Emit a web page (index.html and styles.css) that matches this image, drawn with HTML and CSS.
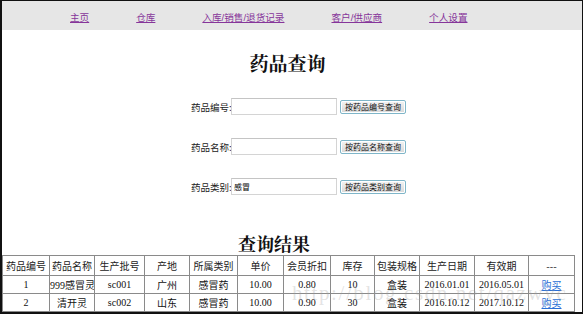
FILE: index.html
```html
<!DOCTYPE html>
<html lang="zh-CN">
<head>
    <meta charset="UTF-8">
    <title>药品查询</title>
    <link rel="stylesheet" href="styles.css">
</head>
<body>
    <div class="frame">
        <div class="nav">
            <a href="#">主页</a>
            <a href="#">仓库</a>
            <a href="#">入库/销售/退货记录</a>
            <a href="#">客户/供应商</a>
            <a href="#">个人设置</a>
        </div>

        <h1 class="title">药品查询</h1>

        <div class="search">
            <div class="row">
                <span class="label">药品编号:</span>
                <input type="text" class="field">
                <button class="btn">按药品编号查询</button>
            </div>
            <div class="row">
                <span class="label">药品名称:</span>
                <input type="text" class="field">
                <button class="btn">按药品名称查询</button>
            </div>
            <div class="row">
                <span class="label">药品类别:</span>
                <input type="text" class="field" value="感冒">
                <button class="btn">按药品类别查询</button>
            </div>
        </div>

        <h2 class="result-title">查询结果</h2>

        <table class="result">
            <colgroup>
                <col style="width: 47px">
                <col style="width: 45px">
                <col style="width: 50px">
                <col style="width: 45px">
                <col style="width: 48px">
                <col style="width: 46px">
                <col style="width: 47px">
                <col style="width: 44px">
                <col style="width: 45px">
                <col style="width: 55px">
                <col style="width: 54px">
                <col style="width: 46px">
            </colgroup>
            <thead>
                <tr>
                    <th>药品编号</th>
                    <th>药品名称</th>
                    <th>生产批号</th>
                    <th>产地</th>
                    <th>所属类别</th>
                    <th>单价</th>
                    <th>会员折扣</th>
                    <th>库存</th>
                    <th>包装规格</th>
                    <th>生产日期</th>
                    <th>有效期</th>
                    <th>---</th>
                </tr>
            </thead>
            <tbody>
                <tr>
                    <td>1</td>
                    <td>999感冒灵</td>
                    <td>sc001</td>
                    <td>广州</td>
                    <td>感冒药</td>
                    <td>10.00</td>
                    <td>0.80</td>
                    <td>10</td>
                    <td>盒装</td>
                    <td>2016.01.01</td>
                    <td>2016.05.01</td>
                    <td><a href="#" class="buy">购买</a></td>
                </tr>
                <tr>
                    <td>2</td>
                    <td>清开灵</td>
                    <td>sc002</td>
                    <td>山东</td>
                    <td>感冒药</td>
                    <td>10.00</td>
                    <td>0.90</td>
                    <td>30</td>
                    <td>盒装</td>
                    <td>2016.10.12</td>
                    <td>2017.10.12</td>
                    <td><a href="#" class="buy">购买</a></td>
                </tr>
            </tbody>
        </table>

        <div class="watermark">http://blog.csdn.net/qazwyc</div>
    </div>
</body>
</html>
```

FILE: styles.css
```css
* {
    box-sizing: border-box;
    margin: 0;
    padding: 0;
}

body {
    font-family: 'Liberation Serif', 'Noto Sans CJK SC', serif;
    background-color: #ffffff;
    color: #000;
}

.frame {
    position: relative;
    width: 583px;
    height: 314px;
    border: 1px solid #111;
    border-left-width: 2px;
    border-bottom-width: 2px;
    overflow: hidden;
}

/* top navigation */
.nav {
    display: flex;
    align-items: center;
    gap: 47px;
    height: 29px;
    padding-left: 68px;
    padding-top: 3px;
    background-color: #e6e6e6;
}

.nav a {
    font-family: 'Liberation Sans', 'Noto Sans CJK SC', sans-serif;
    font-size: 9.6px;
    color: #86359a;
    text-decoration: underline;
}

.title {
    margin-top: 21px;
    padding-right: 9px;
    text-align: center;
    font-family: 'Noto Serif CJK SC', 'Noto Sans CJK SC', serif;
    font-size: 19px;
    line-height: 24px;
    font-weight: bold;
    color: #111;
}

/* search form */
.search {
    display: flex;
    flex-direction: column;
    gap: 23px;
    margin-top: 23px;
    padding-left: 189px;
}

.row {
    display: flex;
    align-items: center;
    height: 17px;
}

.label {
    width: 40px;
    font-family: 'Noto Sans CJK SC', sans-serif;
    font-size: 9.5px;
    color: #222;
    white-space: nowrap;
}

.field {
    width: 106px;
    height: 17px;
    border: 1px solid #d4d4d4;
    border-top-color: #c4c4c4;
    padding: 0 2px;
    font-family: 'Noto Sans CJK SC', sans-serif;
    font-size: 8px;
    color: #000;
    background-color: #fff;
}

.btn {
    width: 66px;
    height: 14px;
    margin-left: 3px;
    border: 1px solid #7fb6c9;
    border-radius: 2px;
    background: linear-gradient(#f4f4f4, #d8d8d8);
    box-shadow: inset 0 0 0 1px #ffffff;
    font-family: 'Noto Sans CJK SC', sans-serif;
    font-size: 8px;
    line-height: 12px;
    color: #111;
}

.result-title {
    margin-top: 37px;
    margin-left: 236px;
    font-family: 'Noto Serif CJK SC', 'Noto Sans CJK SC', serif;
    font-size: 18px;
    line-height: 22px;
    font-weight: bold;
    color: #111;
}

/* result table */
.result {
    width: 572px;
    margin-top: 1px;
    border-collapse: collapse;
    table-layout: fixed;
    border: 1px solid #333;
}

.result th,
.result td {
    border: 1px solid #8a8a8a;
    text-align: center;
    font-size: 10px;
    font-weight: normal;
    white-space: nowrap;
    overflow: hidden;
}

.result th {
    height: 20px;
    font-family: 'Noto Sans CJK SC', sans-serif;
    color: #222;
}

.result td {
    height: 18px;
    color: #111;
}

.buy {
    font-family: 'Noto Sans CJK SC', sans-serif;
    color: #2a6fd6;
}

.watermark {
    position: absolute;
    left: 290px;
    top: 280px;
    font-family: 'Liberation Serif', serif;
    font-size: 21px;
    letter-spacing: 1.6px;
    color: rgba(160, 160, 160, 0.3);
    pointer-events: none;
    white-space: nowrap;
}
```
